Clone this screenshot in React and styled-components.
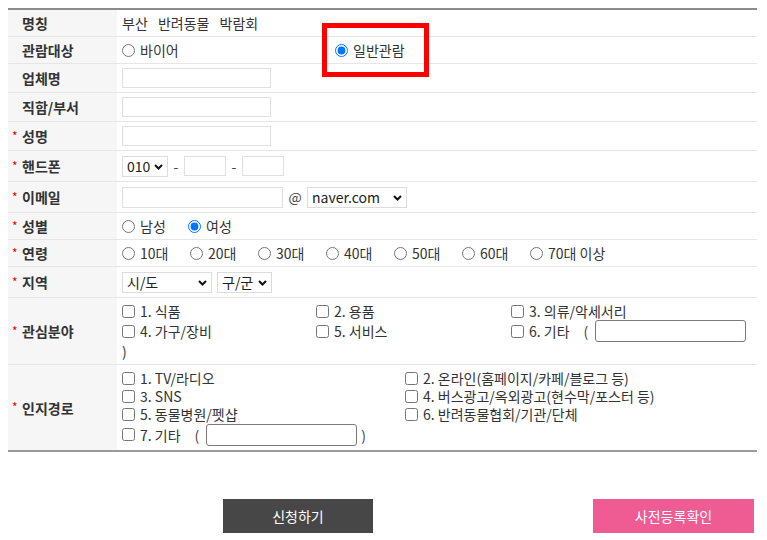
import React from "react";
import styled, { createGlobalStyle } from "styled-components";

const GlobalStyle = createGlobalStyle`
  html, body { margin: 0; padding: 0; background: #fff; }
  body {
    font-family: "Noto Sans CJK KR", "Noto Sans", sans-serif;
    color: #333;
  }
  * { box-sizing: border-box; }
`;

const Page = styled.div`
  position: relative;
  width: 767px;
  height: 540px;
  padding: 8px 10px 0 8px;
  overflow: hidden;
`;

const Table = styled.div`
  border-top: 2px solid #8c8c8c;
  border-bottom: 2px solid #9a9a9a;
`;

const Row = styled.div`
  display: grid;
  grid-template-columns: 109px 1fr;
  height: ${(p) => p.$h}px;
  border-bottom: 1px solid #e6e6e6;
  &:last-child { border-bottom: none; }
`;

const Label = styled.div`
  display: flex;
  align-items: center;
  padding-left: 4px;
  background: #f6f6f6;
  font-size: 14px;
  font-weight: 700;
  color: #333;
`;

const Star = styled.span`
  display: inline-block;
  width: 10px;
  color: #e60000;
  font-size: 12px;
  font-weight: 400;
  margin-top: -2px;
  visibility: ${(p) => (p.$show ? "visible" : "hidden")};
`;

const Cell = styled.div`
  display: flex;
  align-items: center;
  padding: 0 5px;
  font-size: 14px;
  color: #333;
  white-space: nowrap;
`;

const StackCell = styled.div`
  display: flex;
  flex-direction: column;
  justify-content: center;
  padding: 0 5px;
  font-size: 14px;
  line-height: 18px;
  color: #333;
  white-space: nowrap;
`;

const Value = styled.span`
  word-spacing: 7px;
`;

const Choice = styled.label`
  display: inline-flex;
  align-items: center;
  width: ${(p) => (p.$w ? `${p.$w}px` : "auto")};
  flex: none;
  height: ${(p) => (p.$lh ? `${p.$lh}px` : "auto")};
`;

const Radio = styled.input.attrs({ type: "radio" })`
  width: 13px;
  height: 13px;
  margin: 0 5px 0 0;
  flex: none;
`;

const Check = styled.input.attrs({ type: "checkbox" })`
  width: 13px;
  height: 13px;
  margin: 0 5px 0 0;
  flex: none;
`;

const TextBox = styled.input.attrs({ type: "text" })`
  width: ${(p) => p.$w}px;
  height: ${(p) => p.$hgt || 20}px;
  border: 1px solid #e0e0e0;
  border-radius: 0;
  padding: 0 4px;
  margin: 0;
  font: inherit;
  outline: none;
  background: #fff;
`;

const EtcBox = styled.input.attrs({ type: "text" })`
  width: 151px;
  height: 22px;
  border: 1px solid #7a7a7a;
  border-radius: 3px;
  padding: 0 4px;
  margin: 0;
  font: inherit;
  background: #fff;
`;

const SelectWrap = styled.span`
  position: relative;
  display: inline-flex;
  flex: none;
  margin-right: ${(p) => p.$mr || 0}px;
`;

const Select = styled.select`
  appearance: none;
  -webkit-appearance: none;
  width: ${(p) => p.$w}px;
  height: 21px;
  border: 1px solid #dcdcdc;
  border-radius: 0;
  background: #fff;
  color: #222;
  font-family: "Noto Sans CJK KR", "Noto Sans", sans-serif;
  font-size: 14px;
  line-height: 19px;
  padding: 0 14px 0 4px;
  margin: 0;
  outline: none;
`;

const Chevron = styled.svg`
  position: absolute;
  right: 5px;
  top: 8px;
  pointer-events: none;
`;

const Sep = styled.span`
  display: inline-block;
  width: ${(p) => p.$w}px;
  text-align: center;
  color: #444;
`;

const Grid = styled.div`
  display: grid;
  grid-template-columns: ${(p) => p.$cols};
  grid-auto-rows: ${(p) => p.$rh}px;
  align-items: center;
  line-height: ${(p) => p.$rh}px;
`;

const Paren = styled.span`
  margin: 0 ${(p) => p.$mr || 0}px 0 ${(p) => p.$ml || 0}px;
  color: #444;
`;

const LineBreak = styled.div`
  height: 20px;
  line-height: 20px;
`;

const ButtonBar = styled.div`
  display: flex;
  justify-content: space-between;
  margin-top: 47px;
  padding: 0 3px 0 215px;
`;

const Button = styled.button`
  width: ${(p) => p.$w}px;
  height: 34px;
  border: none;
  border-radius: 0;
  background: ${(p) => p.$bg};
  color: #fff;
  font-family: "Noto Sans CJK KR", "Noto Sans", sans-serif;
  font-size: 14px;
  cursor: pointer;
`;

const Highlight = styled.div`
  position: absolute;
  left: 322px;
  top: 23px;
  width: 107px;
  height: 54px;
  border: 5px solid #ff0000;
  pointer-events: none;
`;

const FieldLabel = ({ req, children }) => (
  <Label>
    <Star $show={req}>*</Star>
    {children}
  </Label>
);

const Dropdown = ({ w, mr, value, options }) => (
  <SelectWrap $mr={mr}>
    <Select $w={w} defaultValue={value}>
      {options.map((o) => (
        <option key={o}>{o}</option>
      ))}
    </Select>
    <Chevron width="9" height="6" viewBox="0 0 9 6">
      <path d="M1 1 L4.5 4.5 L8 1" fill="none" stroke="#111" strokeWidth="2" />
    </Chevron>
  </SelectWrap>
);

export default function App() {
  const ages = ["10대", "20대", "30대", "40대", "50대", "60대", "70대 이상"];
  return (
    <>
      <GlobalStyle />
      <Page>
        <Table>
          <Row $h={27}>
            <FieldLabel>명칭</FieldLabel>
            <Cell>
              <Value>부산 반려동물 박람회</Value>
            </Cell>
          </Row>
          <Row $h={27}>
            <FieldLabel>관람대상</FieldLabel>
            <Cell>
              <Choice $w={213}>
                <Radio name="target" />
                바이어
              </Choice>
              <Choice>
                <Radio name="target" defaultChecked />
                일반관람
              </Choice>
            </Cell>
          </Row>
          <Row $h={29}>
            <FieldLabel>업체명</FieldLabel>
            <Cell>
              <TextBox $w={149} />
            </Cell>
          </Row>
          <Row $h={29}>
            <FieldLabel>직함/부서</FieldLabel>
            <Cell>
              <TextBox $w={149} />
            </Cell>
          </Row>
          <Row $h={29}>
            <FieldLabel req>성명</FieldLabel>
            <Cell>
              <TextBox $w={149} />
            </Cell>
          </Row>
          <Row $h={31}>
            <FieldLabel req>핸드폰</FieldLabel>
            <Cell>
              <Dropdown w={46} value="010" options={["010", "011", "016", "017", "019"]} />
              <Sep $w={16}>-</Sep>
              <TextBox $w={42} />
              <Sep $w={16}>-</Sep>
              <TextBox $w={42} />
            </Cell>
          </Row>
          <Row $h={31}>
            <FieldLabel req>이메일</FieldLabel>
            <Cell>
              <TextBox $w={161} $hgt={21} />
              <Sep $w={24}>@</Sep>
              <Dropdown
                w={100}
                value="naver.com"
                options={["naver.com", "daum.net", "gmail.com", "직접입력"]}
              />
            </Cell>
          </Row>
          <Row $h={27}>
            <FieldLabel req>성별</FieldLabel>
            <Cell>
              <Choice $w={66}>
                <Radio name="gender" />
                남성
              </Choice>
              <Choice>
                <Radio name="gender" defaultChecked />
                여성
              </Choice>
            </Cell>
          </Row>
          <Row $h={27}>
            <FieldLabel req>연령</FieldLabel>
            <Cell>
              {ages.map((a) => (
                <Choice key={a} $w={68}>
                  <Radio name="age" />
                  {a}
                </Choice>
              ))}
            </Cell>
          </Row>
          <Row $h={31}>
            <FieldLabel req>지역</FieldLabel>
            <Cell>
              <Dropdown w={90} mr={5} value="시/도" options={["시/도", "부산", "서울"]} />
              <Dropdown w={55} value="구/군" options={["구/군"]} />
            </Cell>
          </Row>
          <Row $h={67}>
            <FieldLabel req>관심분야</FieldLabel>
            <StackCell>
              <Grid $cols="194px 195px auto" $rh={20}>
                <Choice><Check />1. 식품</Choice>
                <Choice><Check />2. 용품</Choice>
                <Choice><Check />3. 의류/악세서리</Choice>
                <Choice><Check />4. 가구/장비</Choice>
                <Choice><Check />5. 서비스</Choice>
                <Choice>
                  <Check />6. 기타
                  <Paren $ml={14} $mr={7}>(</Paren>
                  <EtcBox />
                </Choice>
              </Grid>
              <LineBreak>)</LineBreak>
            </StackCell>
          </Row>
          <Row $h={85}>
            <FieldLabel req>인지경로</FieldLabel>
            <StackCell>
              <Grid $cols="283px auto" $rh={18}>
                <Choice><Check />1. TV/라디오</Choice>
                <Choice><Check />2. 온라인(홈페이지/카페/블로그 등)</Choice>
                <Choice><Check />3. SNS</Choice>
                <Choice><Check />4. 버스광고/옥외광고(현수막/포스터 등)</Choice>
                <Choice><Check />5. 동물병원/펫샵</Choice>
                <Choice><Check />6. 반려동물협회/기관/단체</Choice>
              </Grid>
              <Choice $lh={23}>
                <Check />7. 기타
                <Paren $ml={14} $mr={7}>(</Paren>
                <EtcBox />
                <Paren $ml={4}>)</Paren>
              </Choice>
            </StackCell>
          </Row>
        </Table>
        <ButtonBar>
          <Button $w={150} $bg="#474747">신청하기</Button>
          <Button $w={161} $bg="#ef5b93">사전등록확인</Button>
        </ButtonBar>
        <Highlight />
      </Page>
    </>
  );
}
